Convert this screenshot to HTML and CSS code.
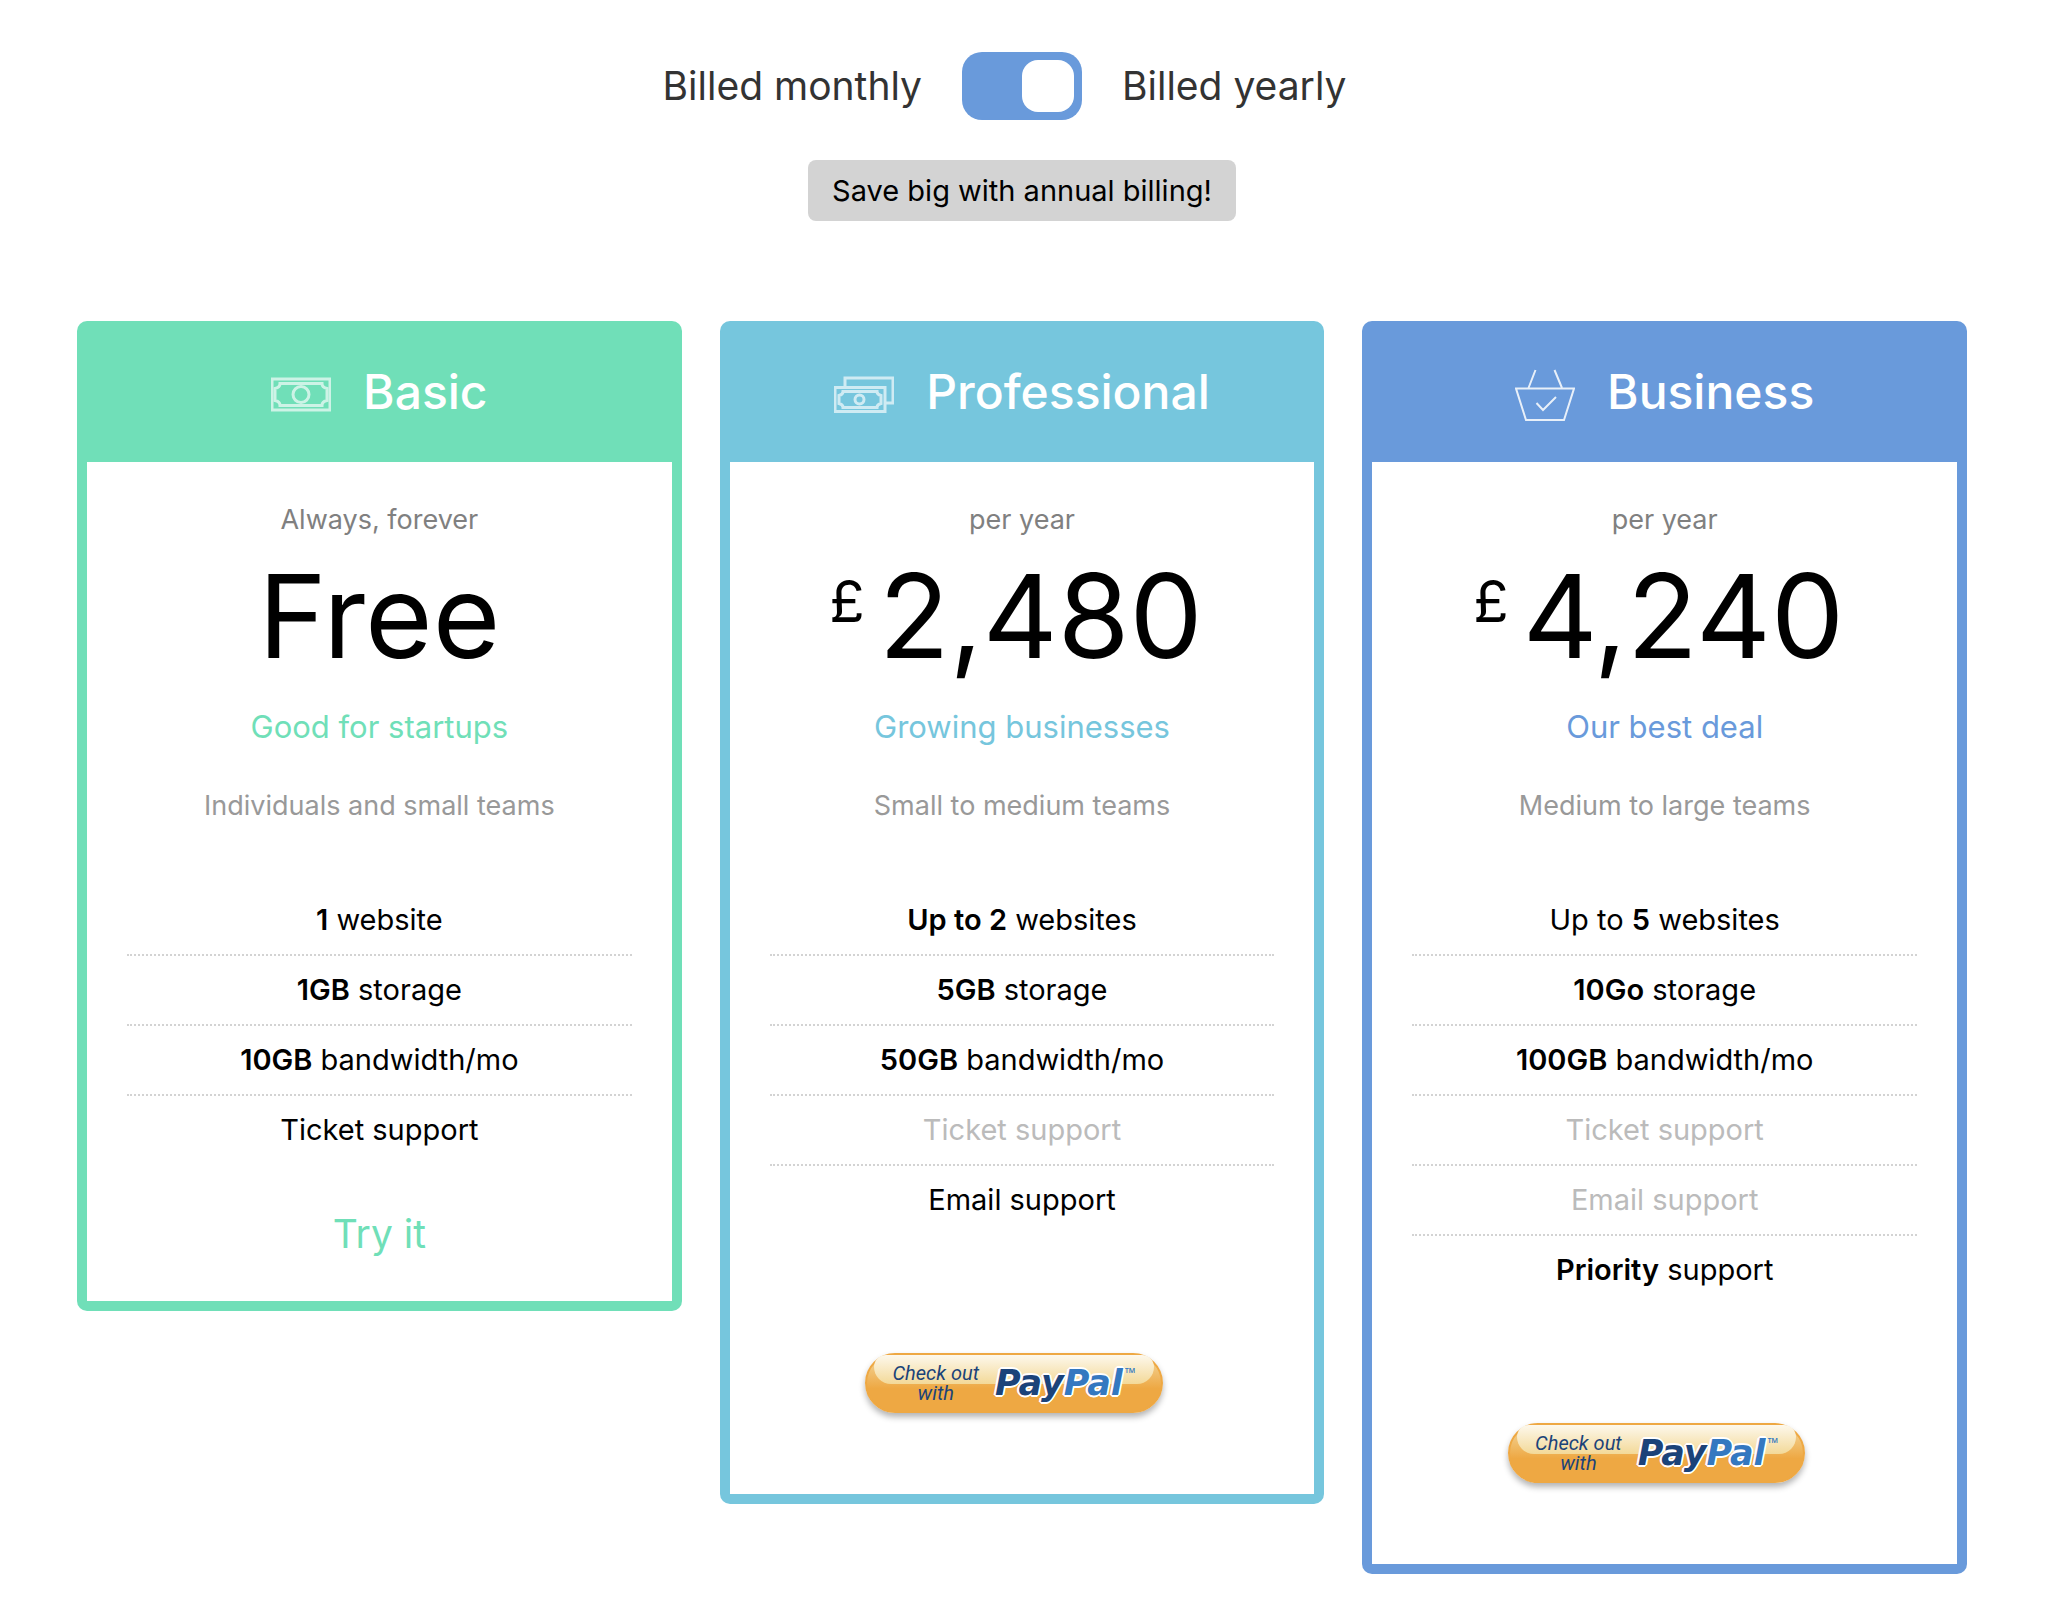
FILE: index.html
```html
<!DOCTYPE html>
<html lang="en">
<head>
    <meta charset="UTF-8">
    <meta name="viewport" content="width=device-width, initial-scale=1.0">
    <title>Pricing</title>
    <link rel="stylesheet" href="styles.css">
</head>
<body>

<div class="billing">
    <label class="billing-label monthly" for="billingToggle">Billed monthly</label>
    <input type="checkbox" class="toggle" id="billingToggle" checked>
    <label class="billing-label" for="billingToggle">Billed yearly</label>
</div>
<p class="notice">Save big with annual billing!</p>

<div class="plans">

    <section class="plan basic">
        <header class="plan-header">
            <svg class="icon" viewBox="0 0 60 60" aria-hidden="true">
                <rect x="1" y="17" width="58" height="31"/>
                <path d="M9 21.500h42q0 4 5 5v12q-5 1-5 5H9q0-4-5-5v-12q5-1 5-5z"/>
                <circle cx="30" cy="32.500" r="8"/>
            </svg>
            <h2>Basic</h2>
        </header>
        <div class="plan-body">
            <p class="period">Always, forever</p>
            <p class="price">Free</p>
            <p class="tagline">Good for startups</p>
            <p class="audience">Individuals and small teams</p>
            <ul class="features">
                <li><b>1</b> website</li>
                <li><b>1GB</b> storage</li>
                <li><b>10GB</b> bandwidth/mo</li>
                <li>Ticket support</li>
            </ul>
            <a class="try" href="#">Try it</a>
        </div>
    </section>

    <section class="plan professional">
        <header class="plan-header">
            <svg class="icon" viewBox="0 0 60 60" aria-hidden="true">
                <path d="M11 25v-9h48v25h-8"/>
                <rect x="1" y="25.500" width="50" height="24"/>
                <path d="M9 29.500h34q0 3 4 4v8q-4 1-4 4H9q0-3-4-4v-8q4-1 4-4z"/>
                <circle cx="25.500" cy="37.500" r="4.500"/>
            </svg>
            <h2>Professional</h2>
        </header>
        <div class="plan-body">
            <p class="period">per year</p>
            <p class="price"><span class="currency">£</span>2,480</p>
            <p class="tagline">Growing businesses</p>
            <p class="audience">Small to medium teams</p>
            <ul class="features">
                <li><b>Up to 2</b> websites</li>
                <li><b>5GB</b> storage</li>
                <li><b>50GB</b> bandwidth/mo</li>
                <li class="included">Ticket support</li>
                <li>Email support</li>
            </ul>
            <button type="button" class="paypal">
                <span class="checkout">Check out<br>with</span>
                <span class="brand">Pay<span class="pal">Pal</span></span>
                <span class="tm">™</span>
            </button>
        </div>
    </section>

    <section class="plan business">
        <header class="plan-header">
            <svg class="icon basket" viewBox="0 0 60 60" aria-hidden="true">
                <path d="M20.500 8l-7 18M39.500 8l7.500 18"/>
                <path d="M1 26.500h58l-10 31.500H11z"/>
                <path d="M21.500 41l6.500 7 13-13"/>
            </svg>
            <h2>Business</h2>
        </header>
        <div class="plan-body">
            <p class="period">per year</p>
            <p class="price"><span class="currency">£</span>4,240</p>
            <p class="tagline">Our best deal</p>
            <p class="audience">Medium to large teams</p>
            <ul class="features">
                <li>Up to <b>5</b> websites</li>
                <li><b>10Go</b> storage</li>
                <li><b>100GB</b> bandwidth/mo</li>
                <li class="included">Ticket support</li>
                <li class="included">Email support</li>
                <li><b>Priority</b> support</li>
            </ul>
            <button type="button" class="paypal">
                <span class="checkout">Check out<br>with</span>
                <span class="brand">Pay<span class="pal">Pal</span></span>
                <span class="tm">™</span>
            </button>
        </div>
    </section>

</div>

</body>
</html>
```
FILE: styles.css
```css
* {
    box-sizing: border-box;
    margin: 0;
    padding: 0;
}

body {
    padding: 52px 101px 34px 77px;
    background: white;
    color: black;
    font-family: Inter, "Liberation Sans", sans-serif;
}

/* Billing switch */
.billing {
    display: grid;
    grid-template-columns: 1fr auto 1fr;
    align-items: center;
    gap: 40px;
}

.billing-label {
    font-size: 39px;
    line-height: 68px;
    color: #333;
}

.monthly {
    text-align: right;
}

.toggle {
    appearance: none;
    width: 120px;
    height: 68px;
    padding: 8px;
    display: flex;
    border-radius: 20px;
    background: #bbb;
    cursor: pointer;
}

.toggle::before {
    content: "";
    width: 52px;
    height: 52px;
    border-radius: 16px;
    background: white;
}

.toggle:checked {
    justify-content: flex-end;
    background: #699adb;
}

.notice {
    width: fit-content;
    margin: 40px auto 100px;
    padding: 0 24px;
    border-radius: 8px;
    background: lightgray;
    font-size: 29px;
    line-height: 61px;
}

/* Plans */
.plans {
    display: flex;
    align-items: flex-start;
    gap: 38px;
}

.plan {
    --plan-color: #70dfb8;
    flex: 1;
    border-radius: 10px;
    background: var(--plan-color);
    text-align: center;
}

.professional {
    --plan-color: #76c6dd;
}

.business {
    --plan-color: #699adb;
}

.plan-header {
    display: flex;
    justify-content: center;
    align-items: center;
    gap: 32px;
    padding: 40px;
    color: white;
}

.plan-header h2 {
    font-size: 48px;
    font-weight: 500;
    line-height: 61px;
}

.icon {
    width: 60px;
    height: 60px;
    fill: none;
    stroke: white;
    stroke-width: 3;
    opacity: 0.65;
}

.basket {
    stroke-width: 2;
    opacity: 0.85;
}

.plan-body {
    margin: 0 10px;
    padding: 38px 40px 37px;
    background: white;
}

.plan::after {
    content: "";
    display: block;
    height: 10px;
}

.period,
.audience {
    font-size: 27px;
    line-height: 40px;
    color: gray;
}

.price {
    display: flex;
    justify-content: center;
    align-items: flex-start;
    gap: 14px;
    font-size: 116px;
    line-height: 152px;
}

.currency {
    margin-left: -12px;
    font-size: 58px;
    line-height: 122px;
}

.tagline {
    margin: 15px 0 39px;
    font-size: 31px;
    line-height: 40px;
    color: var(--plan-color);
}

.audience {
    color: #999;
}

.features {
    margin-top: 60px;
    list-style: none;
    font-size: 29px;
    line-height: 68px;
}

.features li + li {
    border-top: 2px dotted lightgray;
}

.features b {
    font-weight: 600;
}

.features .included {
    color: #bbb;
}

.try {
    display: block;
    margin-top: 40px;
    font-size: 39px;
    line-height: 60px;
    color: var(--plan-color);
    text-decoration: none;
}

/* PayPal button */
.paypal {
    position: relative;
    display: inline-flex;
    align-items: center;
    gap: 16px;
    height: 60px;
    margin: 119px 16px 44px 0;
    padding: 0 25px;
    border: 2px solid #eea843;
    border-radius: 30px;
    background: linear-gradient(#f3d9a0, #eea843 60%);
    box-shadow: 0 4px 6px rgba(0, 0, 0, 0.3);
    vertical-align: top;
    cursor: pointer;
}

/* glossy highlight */
.paypal::before {
    content: "";
    position: absolute;
    inset: 0 7px 27px;
    border-radius: 20px 20px 28px 28px;
    background: linear-gradient(#fdf8ec, #f3d998);
}

.checkout,
.brand,
.tm {
    position: relative;
}

.checkout {
    font: italic 20px/20px Roboto, sans-serif;
    color: #1b4379;
}

.brand {
    font: italic bold 35px/50px "DejaVu Sans", sans-serif;
    color: #1b4379;
    text-shadow: 2px 0 white, -2px 0 white, 0 2px white, 0 -2px white, 1px 1px white, -1px -1px white, 1px -1px white, -1px 1px white;
}

.pal {
    color: #3478c0;
}

.tm {
    align-self: flex-start;
    margin-left: -14px;
    font: 14px/36px "Open Sans", sans-serif;
    color: #3478c0;
}
```
